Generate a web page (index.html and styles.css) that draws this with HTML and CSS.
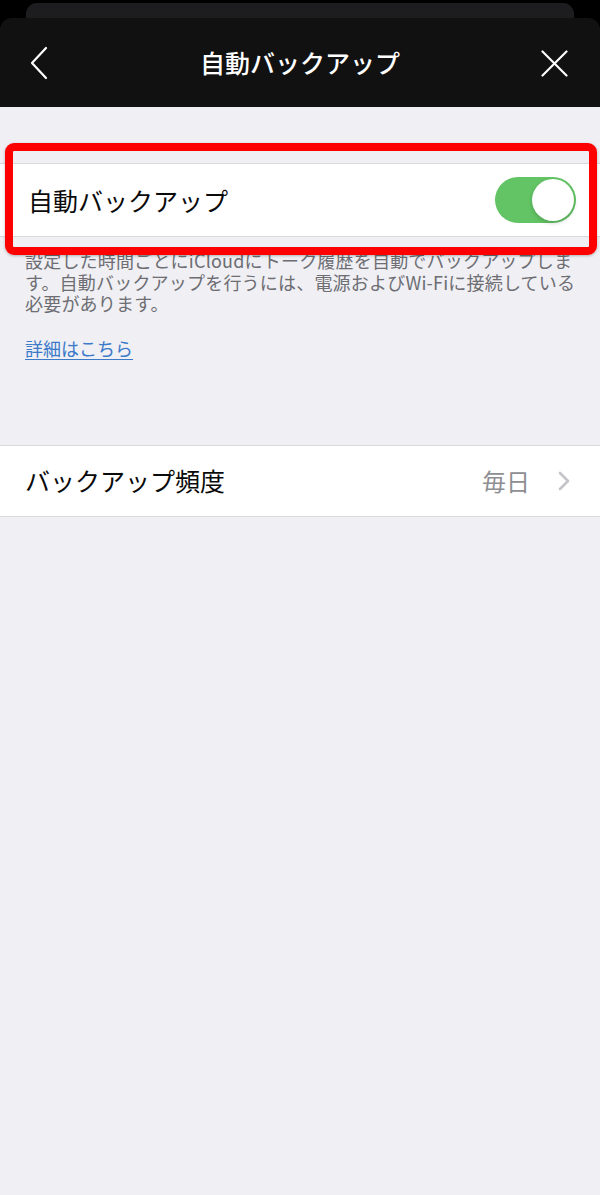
FILE: index.html
```html
<!DOCTYPE html>
<html lang="ja">
  <head>
    <meta charset="UTF-8" />
    <meta name="viewport" content="width=device-width, initial-scale=1.0" />
    <title>自動バックアップ</title>
    <link rel="stylesheet" href="styles.css">
  </head>
  <body>
    <div class="sheet-stack">
      <div class="sheet-behind"></div>
    </div>

    <div class="nav-bar">
      <button class="nav-btn nav-back" aria-label="戻る">
        <svg width="18" height="34" viewBox="0 0 18 34">
          <polyline points="16,2 2,17 16,32" fill="none" stroke="#fff" stroke-width="2.2" stroke-linecap="round" stroke-linejoin="round"/>
        </svg>
      </button>
      <div class="nav-title">自動バックアップ</div>
      <button class="nav-btn nav-close" aria-label="閉じる">
        <svg width="27" height="27" viewBox="0 0 27 27">
          <line x1="1.5" y1="1.5" x2="25.5" y2="25.5" stroke="#fff" stroke-width="2.2" stroke-linecap="round"/>
          <line x1="25.5" y1="1.5" x2="1.5" y2="25.5" stroke="#fff" stroke-width="2.2" stroke-linecap="round"/>
        </svg>
      </button>
    </div>

    <div class="settings">
      <div class="cell cell-first">
        <span class="cell-label">自動バックアップ</span>
        <div class="switch on">
          <div class="switch-knob"></div>
        </div>
      </div>

      <p class="footnote">設定した時間ごとにiCloudにトーク履歴を自動でバックアップしま<br>す。自動バックアップを行うには、電源およびWi-Fiに接続している<br>必要があります。</p>
      <p class="footnote"><a class="footnote-link" href="#">詳細はこちら</a></p>

      <div class="cell cell-second">
        <span class="cell-label">バックアップ頻度</span>
        <div class="cell-detail">
          <span class="cell-value">毎日</span>
          <svg class="cell-chevron" width="12" height="20" viewBox="0 0 12 20">
            <polyline points="2,2 10,10 2,18" fill="none" stroke="#c4c4c9" stroke-width="2.6" stroke-linecap="round" stroke-linejoin="round"/>
          </svg>
        </div>
      </div>

      <div class="highlight-box"></div>
    </div>
  </body>
</html>
```

FILE: styles.css
```css
* {
  box-sizing: border-box;
}

html,
body {
  margin: 0;
  padding: 0;
}

body {
  width: 600px;
  height: 1195px;
  overflow: hidden;
  background-color: #000;
  font-family: "Noto Sans CJK JP", "Noto Sans", sans-serif;
}

.sheet-stack {
  height: 18px;
  padding-top: 3px;
}

.sheet-behind {
  height: 15px;
  margin: 0 26px;
  background-color: #1d1d1f;
  border-radius: 11px 11px 0 0;
}

.nav-bar {
  height: 89px;
  background-color: #111112;
  border-radius: 12px 12px 0 0;
  display: grid;
  grid-template-columns: 1fr auto 1fr;
  align-items: center;
}

.nav-btn {
  background: none;
  border: none;
  padding: 0;
  display: flex;
  align-items: center;
  cursor: pointer;
}

.nav-back {
  justify-self: start;
  margin-left: 30px;
  margin-top: 1px;
}

.nav-close {
  justify-self: end;
  margin-right: 32px;
  margin-top: 1px;
}

.nav-title {
  color: #fff;
  font-size: 25px;
  font-weight: 500;
  line-height: 1;
}

.settings {
  position: relative;
  height: 1088px;
  background-color: #efeff4;
  padding-top: 56px;
}

.cell {
  height: 74px;
  background-color: #fff;
  border-top: 1px solid #d9d9dd;
  border-bottom: 1px solid #d9d9dd;
  display: flex;
  align-items: center;
  justify-content: space-between;
}

.cell-first {
  padding: 0 24px 0 28px;
}

.cell-second {
  height: 72px;
  margin-top: 85px;
  padding: 0 30px 0 25px;
}

.cell-label {
  font-size: 25px;
  color: #0a0a0a;
  line-height: 1;
}

.switch {
  width: 81px;
  height: 46px;
  border-radius: 23px;
  background-color: #e5e5ea;
  padding: 2px;
  display: flex;
}

.switch.on {
  background-color: #62c464;
  justify-content: flex-end;
}

.switch-knob {
  width: 42px;
  height: 42px;
  border-radius: 50%;
  background-color: #fff;
  box-shadow: 0 2px 4px rgba(0, 0, 0, 0.18);
}

.footnote {
  margin: 13px 0 0;
  padding: 0 25px;
  font-size: 18px;
  line-height: 21.5px;
  letter-spacing: 0.2px;
  color: #6d6d72;
  white-space: nowrap;
}

.footnote + .footnote {
  margin-top: 23.5px;
}

.footnote-link {
  color: #3b7ac9;
  letter-spacing: 0;
  text-decoration: underline;
  text-underline-offset: 3px;
}

.cell-detail {
  display: flex;
  align-items: center;
  gap: 28px;
}

.cell-value {
  font-size: 24px;
  color: #8e8e93;
  line-height: 1;
}

.cell-chevron {
  display: block;
}

/* annotation frame drawn over the first cell */
.highlight-box {
  position: absolute;
  left: 5px;
  top: 36px;
  width: 592px;
  height: 112px;
  border: 8px solid #ff0000;
  border-radius: 9px;
  box-shadow: 0 1px 3px rgba(0, 0, 0, 0.25);
  pointer-events: none;
}
```
